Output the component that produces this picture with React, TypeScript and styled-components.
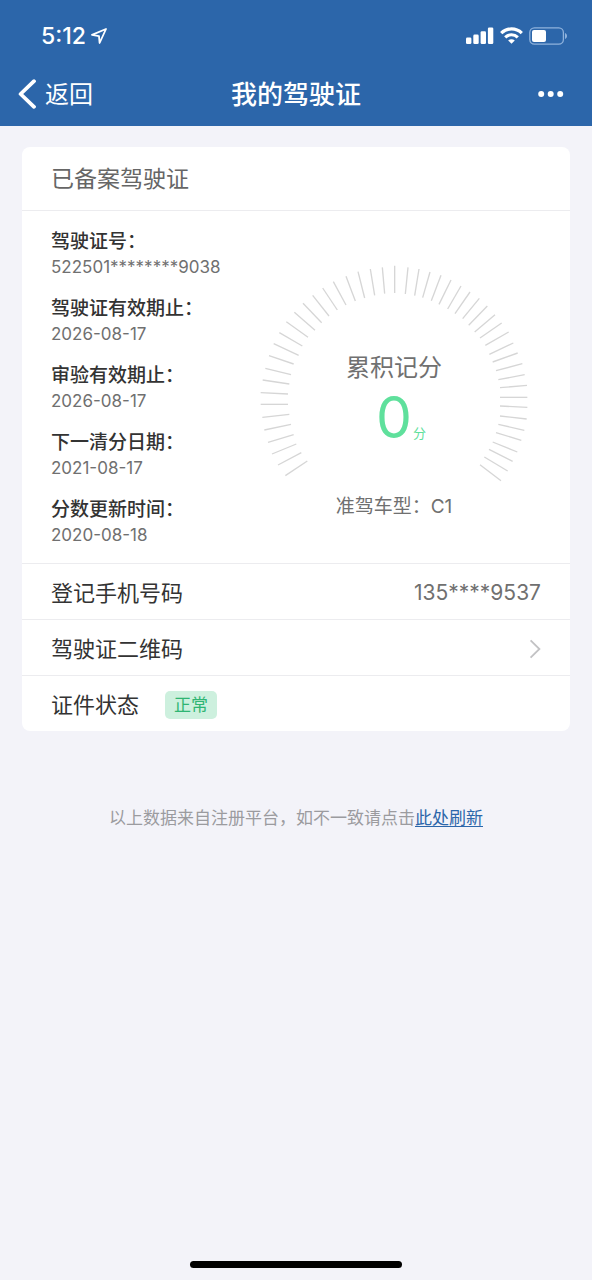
import React from "react";
import styled, { createGlobalStyle } from "styled-components";

const GlobalStyle = createGlobalStyle`
  *, *::before, *::after { box-sizing: border-box; }
  body {
    margin: 0;
    background: #f3f3f9;
    font-family: Inter, "Noto Sans CJK SC", sans-serif;
    color: #333;
  }
  h1, h2, dl, dd, p { margin: 0; font-weight: 400; }
  button { border: 0; padding: 0; background: none; font: inherit; color: inherit; cursor: pointer; }
`;

const Page = styled.div`
  min-height: 100vh;
  display: flex;
  flex-direction: column;
`;

const Header = styled.header`
  background: #2c66aa;
  color: #fff;
`;

const StatusBar = styled.div`
  height: 62px;
  padding: 9px 24px 0 41px;
  display: flex;
  align-items: center;
  justify-content: space-between;
`;

const StatusGroup = styled.div<{ $gap: number }>`
  display: flex;
  align-items: center;
  gap: ${(p) => p.$gap}px;
`;

const Clock = styled.span`
  font-size: 23px;
  line-height: 28px;
  font-weight: 500;
`;

const NavBar = styled.nav`
  height: 64px;
  padding: 0 18px;
  display: grid;
  grid-template-columns: 1fr auto 1fr;
  align-items: center;
`;

const BackButton = styled.button`
  justify-self: start;
  display: flex;
  align-items: center;
  gap: 9px;
  font-size: 24px;
  line-height: 36px;
`;

const BackLabel = styled.span`
  padding-top: 2px;
`;

const Title = styled.h1`
  padding-top: 2px;
  font-size: 26px;
  line-height: 36px;
  font-weight: 500;
`;

const MoreButton = styled.button`
  justify-self: end;
  display: flex;
  padding: 10px;
`;

const Main = styled.main`
  padding: 21px 22px 0;
`;

const Card = styled.section`
  background: #fff;
  border-radius: 8px;
`;

const CardTitle = styled.h2`
  padding: 15px 29px 14px;
  font-size: 23px;
  line-height: 34px;
  color: #666;
`;

const Summary = styled.div`
  display: flex;
  justify-content: space-between;
  padding: 18px 42px 15px 29px;
  border-top: 1px solid #ececef;
`;

const Facts = styled.dl`
  display: flex;
  flex-direction: column;
  gap: 16px;
`;

const FactLabel = styled.dt`
  font-size: 19px;
  line-height: 26px;
  font-weight: 500;
`;

const FactValue = styled.dd`
  font-size: 17px;
  line-height: 25px;
  color: #707070;
`;

const GaugeColumn = styled.div`
  display: flex;
  flex-direction: column;
  align-items: center;
  padding-top: 36px;
`;

const GaugeBox = styled.div`
  display: grid;
  justify-items: center;

  > * { grid-area: 1 / 1; }
`;

const GaugeContent = styled.div`
  padding-top: 85px;
  display: flex;
  flex-direction: column;
  align-items: center;
`;

const GaugeTitle = styled.p`
  font-size: 24px;
  line-height: 36px;
  color: #707070;
`;

const Score = styled.p`
  display: flex;
  align-items: baseline;
  gap: 1px;
  padding-left: 14px;
  color: #5fe09c;
  font-size: 57px;
  line-height: 64px;
`;

const ScoreUnit = styled.span`
  font-size: 13px;
  line-height: 20px;
`;

const VehicleClass = styled.p`
  padding-top: 10px;
  font-size: 19px;
  line-height: 28px;
  color: #707070;
`;

const Row = styled.div`
  min-height: 56px;
  padding: 2px 29px 0;
  display: flex;
  align-items: center;
  border-top: 1px solid #ececef;
  font-size: 22px;
  line-height: 32px;
`;

const RowButton = styled(Row).attrs({ as: "button" })`
  width: 100%;
  justify-content: space-between;
  border-top: 1px solid #ececef;
  padding: 2px 29px 0;
  font-size: 22px;
  line-height: 32px;
  text-align: left;
`;

const RowValue = styled.span`
  margin-left: auto;
  font-size: 21px;
  color: #707070;
`;

const Badge = styled.span`
  margin-left: 26px;
  padding: 0 9px;
  border-radius: 5px;
  background: #cdf0de;
  color: #2fb573;
  font-size: 17px;
  line-height: 28px;
`;

const Notice = styled.p`
  padding: 74px 16px 0;
  text-align: center;
  font-size: 17px;
  line-height: 26px;
  color: #9b9b9f;
`;

const NoticeLink = styled.a`
  color: #2c66aa;
  text-underline-offset: 2px;
`;

const HomeIndicator = styled.div`
  width: 212px;
  height: 7px;
  margin: auto auto 12px;
  border-radius: 4px;
  background: #000;
`;

/* Gauge ticks, each as x1, y1 (outer end), x2, y2 (inner end). */
const ticks: [number, number, number, number][] = [
  [106, 664, 172, 620], [84, 632, 154, 595], [66, 599, 139, 569], [54, 564, 131, 541],
  [43, 527, 123, 510], [37, 489, 118, 480], [32, 450, 114, 450], [32, 415, 114, 419],
  [38, 377, 118, 389], [46, 342, 123, 361], [57, 304, 131, 329], [71, 268, 146, 303],
  [88, 235, 157, 275], [109, 202, 174, 249], [133, 174, 195, 228], [159, 147, 215, 205],
  [188, 123, 237, 185], [218, 101, 262, 167], [250, 82, 288, 152], [288, 66, 316, 140],
  [324, 52, 344, 131], [361, 44, 374, 123], [397, 39, 404, 118], [434, 34, 434, 116],
  [474, 39, 466, 119], [507, 44, 494, 124], [540, 53, 518, 130], [573, 63, 544, 139],
  [603, 77, 567, 150], [633, 95, 593, 164], [660, 113, 615, 178], [688, 132, 638, 193],
  [712, 155, 656, 213], [735, 181, 674, 233], [755, 206, 690, 251], [776, 233, 706, 273],
  [790, 266, 718, 300], [803, 296, 728, 323], [817, 328, 738, 349], [824, 361, 745, 376],
  [831, 393, 750, 400], [832, 429, 750, 429], [832, 459, 750, 455], [830, 494, 750, 485],
  [823, 528, 745, 510], [814, 558, 738, 535], [802, 593, 728, 563], [788, 621, 717, 585],
  [773, 650, 703, 608], [753, 679, 690, 631],
];

const facts = [
  { label: "驾驶证号：", value: "522501********9038" },
  { label: "驾驶证有效期止：", value: "2026-08-17" },
  { label: "审验有效期止：", value: "2026-08-17" },
  { label: "下一清分日期：", value: "2021-08-17" },
  { label: "分数更新时间：", value: "2020-08-18" },
];

function LocationIcon() {
  return (
    <svg width="16" height="16" viewBox="0 0 16 16" fill="none" stroke="#fff" strokeWidth="1.8" strokeLinejoin="round" aria-hidden="true">
      <path d="M15 1 1 6.9l7 1.2.6 6.9z" />
    </svg>
  );
}

function SignalIcon() {
  return (
    <svg width="28" height="17" viewBox="0 0 28 17" fill="#fff" aria-hidden="true">
      <rect x="0" y="10.5" width="5.4" height="6.5" rx="1.3" />
      <rect x="7.3" y="7.6" width="5.4" height="9.4" rx="1.3" />
      <rect x="14.6" y="4.2" width="5.4" height="12.8" rx="1.3" />
      <rect x="21.9" y="0.4" width="5.4" height="16.6" rx="1.3" />
    </svg>
  );
}

function WifiIcon() {
  return (
    <svg width="23" height="17" viewBox="0 0 23 17" fill="none" stroke="#fff" strokeWidth="3.2" aria-hidden="true">
      <path d="M1.2 6.1C7 .5 16 .5 21.8 6.1" />
      <path d="M5.2 10.3c3.6-3.4 9-3.4 12.6 0" />
      <path d="M11.5 16.8 8.2 13.4c1.9-1.7 4.7-1.7 6.6 0z" fill="#fff" stroke="none" />
    </svg>
  );
}

function BatteryIcon() {
  return (
    <svg width="39" height="18" viewBox="0 0 39 18" aria-hidden="true">
      <rect x="0.8" y="0.8" width="33.6" height="16.4" rx="4.6" fill="none" stroke="#8fb2dc" strokeWidth="1.3" />
      <rect x="3" y="3" width="14" height="12" rx="2" fill="#fff" />
      <path d="M36 6v6c1.3-.5 2-1.6 2-3s-.7-2.5-2-3z" fill="#8fb2dc" />
    </svg>
  );
}

function BackIcon() {
  return (
    <svg width="18" height="30" viewBox="0 0 18 30" fill="none" stroke="#fff" strokeWidth="3.8" strokeLinecap="round" strokeLinejoin="round" aria-hidden="true">
      <path d="M16 2.2 2.6 15 16 27.8" />
    </svg>
  );
}

function MoreIcon() {
  return (
    <svg width="26" height="6" viewBox="0 0 26 6" fill="#fff" aria-hidden="true">
      <circle cx="3.2" cy="3" r="3" />
      <circle cx="12.7" cy="3" r="3" />
      <circle cx="22.2" cy="3" r="3" />
    </svg>
  );
}

function ChevronIcon() {
  return (
    <svg width="12" height="20" viewBox="0 0 12 20" fill="none" stroke="#c2c2c4" strokeWidth="1.8" aria-hidden="true">
      <path d="m1.6 1.4 8.8 8.6-8.8 8.6" />
    </svg>
  );
}

function GaugeTicks() {
  return (
    <svg width="268" height="218" viewBox="30 32 804 654" stroke="#d6d6d6" strokeWidth="4" aria-hidden="true">
      {ticks.map(([x1, y1, x2, y2], i) => (
        <line key={i} x1={x1} y1={y1} x2={x2} y2={y2} />
      ))}
    </svg>
  );
}

export default function App() {
  return (
    <Page lang="zh-CN">
      <GlobalStyle />
      <Header>
        <StatusBar>
          <StatusGroup $gap={5}>
            <Clock>5:12</Clock>
            <LocationIcon />
          </StatusGroup>
          <StatusGroup $gap={6}>
            <SignalIcon />
            <WifiIcon />
            <BatteryIcon />
          </StatusGroup>
        </StatusBar>
        <NavBar>
          <BackButton type="button">
            <BackIcon />
            <BackLabel>返回</BackLabel>
          </BackButton>
          <Title>我的驾驶证</Title>
          <MoreButton type="button" aria-label="更多">
            <MoreIcon />
          </MoreButton>
        </NavBar>
      </Header>

      <Main>
        <Card>
          <CardTitle>已备案驾驶证</CardTitle>
          <Summary>
            <Facts>
              {facts.map((f) => (
                <div key={f.label}>
                  <FactLabel>{f.label}</FactLabel>
                  <FactValue>{f.value}</FactValue>
                </div>
              ))}
            </Facts>
            <GaugeColumn>
              <GaugeBox>
                <GaugeTicks />
                <GaugeContent>
                  <GaugeTitle>累积记分</GaugeTitle>
                  <Score>
                    0<ScoreUnit>分</ScoreUnit>
                  </Score>
                </GaugeContent>
              </GaugeBox>
              <VehicleClass>准驾车型：C1</VehicleClass>
            </GaugeColumn>
          </Summary>
          <Row>
            登记手机号码
            <RowValue>135****9537</RowValue>
          </Row>
          <RowButton type="button">
            驾驶证二维码
            <ChevronIcon />
          </RowButton>
          <Row>
            证件状态
            <Badge>正常</Badge>
          </Row>
        </Card>
        <Notice>
          以上数据来自注册平台，如不一致请点击<NoticeLink href="#refresh">此处刷新</NoticeLink>
        </Notice>
      </Main>

      <HomeIndicator />
    </Page>
  );
}
